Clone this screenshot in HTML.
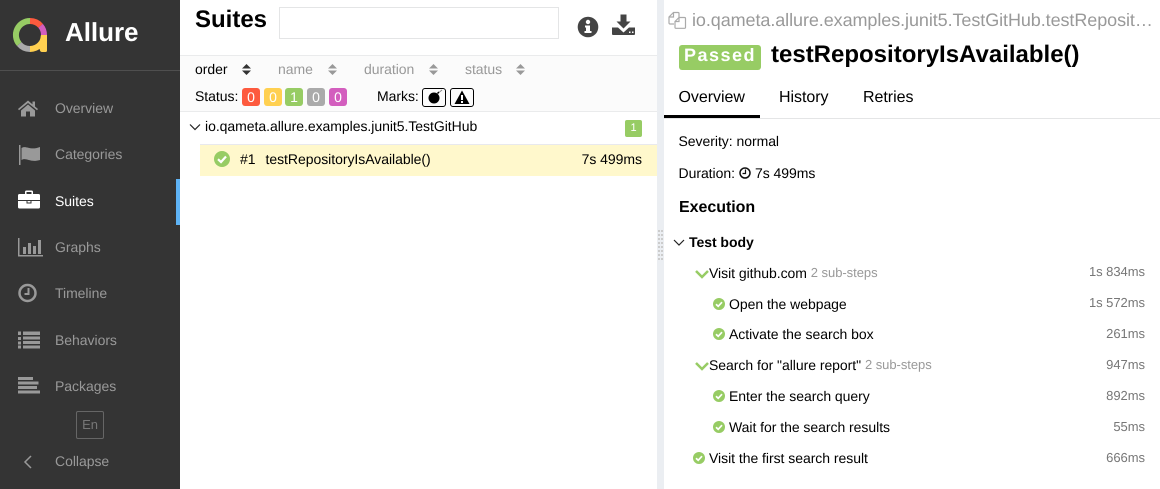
<!DOCTYPE html>
<html><head><meta charset="utf-8"><style>
html,body{margin:0;padding:0;width:1160px;height:489px;overflow:hidden;background:#fff;font-family:"Liberation Sans",sans-serif;font-size:14px;color:#000;text-rendering:geometricPrecision;letter-spacing:-.04px}
.t{position:absolute;white-space:nowrap;line-height:16px}
.b{position:absolute}
svg{position:absolute;display:block}
.n{color:#999;left:55px}
.s{color:#999;left:278px}
.bd{position:absolute;top:88px;width:18px;height:18px;border-radius:3px;color:#fff;text-align:center;line-height:18px;font-size:14px;opacity:1}
.mk{position:absolute;top:88px;width:22px;height:17px;border:1px solid #000;border-radius:3px}
.g{color:#999;font-size:13px;position:relative;top:-1px}
.r{position:absolute;right:15px;color:#777;font-size:13px;line-height:16px}
</style></head><body>
<!-- side -->
<div class="b" style="left:0;top:0;width:180px;height:489px;background:#343434"></div>
<div class="b" style="left:0;top:70px;width:180px;height:1px;background:#4f4f4f"></div>
<div class="b" style="left:176px;top:179px;width:4px;height:46px;background:#5eb3f5"></div>
<svg style="left:12px;top:17px" width="36" height="36" viewBox="0 0 36 36" fill="none" stroke-width="6">
<path d="M18 4A14 14 0 0 1 28.600 8.800" stroke="#fd5a3e"/>
<path d="M28.600 8.800A14 14 0 0 1 32 18" stroke="#d35ebe"/>
<path d="M32 18A14 14 0 0 1 18 32" stroke="#ffd050"/>
<path d="M18 32A14 14 0 0 1 7.200 27" stroke="#aaa"/>
<path d="M7.200 27A14 14 0 0 1 18 4" stroke="#97cc64"/>
<path d="M29 18H35V33.500Q35 35 33.500 35H30Q28.500 35 28 33.500L27 29z" fill="#ffd050" stroke="none"/>
</svg>
<div class="t" style="left:65px;top:17px;font-size:26px;line-height:30px;font-weight:bold;color:#fff">Allure</div>
<div class="t n" style="top:100px">Overview</div>
<div class="t n" style="top:146px">Categories</div>
<div class="t" style="left:55px;top:193px;color:#fff">Suites</div>
<div class="t n" style="top:239px">Graphs</div>
<div class="t n" style="top:285px">Timeline</div>
<div class="t n" style="top:332px">Behaviors</div>
<div class="t n" style="top:378px">Packages</div>
<div class="t n" style="top:453px">Collapse</div>
<div class="b" style="left:76px;top:411px;width:26px;height:26px;border:1px solid #666;border-radius:2px;color:#777;font-size:13px;line-height:25px;text-align:center">En</div>
<svg style="left:18px;top:100px" width="20" height="17" viewBox="0 0 20 17" fill="#999"><path d="M10 0.500L0 9l1 1.200L10 3l9 7.200 1-1.200-3-2.500V1.500h-2.500v2.900zM3 10.500V16.500H8V11.500h4V16.500h5V10.500L10 4.500z"/></svg>
<svg style="left:18px;top:144px" width="23" height="21" viewBox="0 0 23 21" fill="#999"><rect x="1" y="1" width="1.500" height="20"/><path d="M3.500 4C8 1 12 7 22 3V16C12 19 8 13 3.500 16z"/></svg>
<svg style="left:18px;top:190px" width="22" height="19" viewBox="0 0 22 19" fill="#fff"><path d="M7 4V2a1.500 1.500 0 0 1 1.500-1.500h5A1.500 1.500 0 0 1 15 2V4H13.500V2h-5V4zM0 5.500A1.500 1.500 0 0 1 1.500 4h19A1.500 1.500 0 0 1 22 5.500V10H0zM0 11H8.500V13.500H13.500V11H22V17A1.500 1.500 0 0 1 20.500 18.500H1.500A1.500 1.500 0 0 1 0 17z"/><rect x="9.500" y="11" width="3" height="1.500"/></svg>
<svg style="left:18px;top:238px" width="26" height="19" viewBox="0 0 26 19" fill="#999"><rect x="0" y="0" width="1.500" height="18.500"/><rect x="0" y="17" width="25" height="1.500"/><rect x="5" y="9" width="3" height="7"/><rect x="10" y="5" width="3" height="11"/><rect x="15" y="8" width="3" height="8"/><rect x="20" y="2" width="3" height="14"/></svg>
<svg style="left:18px;top:283px" width="20" height="20" viewBox="0 0 20 20" fill="none" stroke="#999"><circle cx="9.500" cy="10" r="8" stroke-width="2.500"/><path d="M10.500 5V11H6.500" stroke-width="2"/></svg>
<svg style="left:18px;top:331px" width="22" height="18" viewBox="0 0 22 18" fill="#999"><rect x="0" y="0.500" width="3" height="3.500"/><rect x="0" y="6" width="3" height="3"/><rect x="0" y="10.500" width="3" height="3"/><rect x="0" y="14.500" width="3" height="3"/><rect x="5" y="0.500" width="17" height="3.500"/><rect x="5" y="5.500" width="17" height="3"/><rect x="5" y="10" width="17" height="3"/><rect x="5" y="14.500" width="17" height="3"/></svg>
<svg style="left:18px;top:376px" width="22" height="18" viewBox="0 0 22 18" fill="#999"><rect x="0" y="1" width="15" height="3"/><rect x="0" y="5.500" width="20.500" height="3"/><rect x="0" y="10" width="19" height="3"/><rect x="0" y="14.500" width="22" height="3"/></svg>
<svg style="left:22px;top:455px" width="12" height="14" viewBox="0 0 12 14" fill="none" stroke="#999" stroke-width="1.500"><path d="M9 1L3 7l6 6"/></svg>

<!-- suites pane -->
<div class="t" style="left:195px;top:5px;font-size:24px;line-height:30px;font-weight:bold;letter-spacing:0">Suites</div>
<div class="b" style="left:279px;top:7px;width:278px;height:30px;border:1px solid #e4e5e6"></div>
<svg style="left:577px;top:16px" width="22" height="22" viewBox="0 0 22 22"><circle cx="11" cy="11" r="10.300" fill="#444"/><circle cx="11" cy="6" r="2.200" fill="#fff"/><path d="M8 9.500H13V15H14.500V17H7.500V15H9V11.500H8z" fill="#fff"/></svg>
<svg style="left:612px;top:14px" width="24" height="22" viewBox="0 0 24 22" fill="#444"><path d="M8.500 0.500H14.500V7.500H18.500L11.500 14.500L4.500 7.500H8.500z"/><path d="M0 13.500H6L11.500 18.500L17 13.500H23V20a1 1 0 0 1-1 1H1a1 1 0 0 1-1-1z"/><rect x="17" y="17.500" width="1.500" height="1.500" fill="#fff"/><rect x="20" y="17.500" width="1.500" height="1.500" fill="#fff"/></svg>
<div class="b" style="left:180px;top:55px;width:477px;height:55px;background:#fbfbfb;border-top:1px solid #eaebec;border-bottom:1px solid #eaebec"></div>
<div class="t" style="left:195px;top:61px">order</div>
<div class="t s" style="top:61px">name</div>
<div class="t s" style="left:364px;top:61px">duration</div>
<div class="t s" style="left:465px;top:61px">status</div>
<svg style="left:241.500px;top:64px" width="9" height="11" viewBox="0 0 9 11" fill="#333"><path d="M4.500 0L9 4.500H0zM0 6.500H9L4.500 11z"/></svg>
<svg style="left:327.500px;top:64px" width="9" height="11" viewBox="0 0 9 11" fill="#999"><path d="M4.500 0L9 4.500H0zM0 6.500H9L4.500 11z"/></svg>
<svg style="left:428.500px;top:64px" width="9" height="11" viewBox="0 0 9 11" fill="#999"><path d="M4.500 0L9 4.500H0zM0 6.500H9L4.500 11z"/></svg>
<svg style="left:516px;top:64px" width="9" height="11" viewBox="0 0 9 11" fill="#999"><path d="M4.500 0L9 4.500H0zM0 6.500H9L4.500 11z"/></svg>
<div class="t" style="left:195px;top:88px">Status:</div>
<div class="bd" style="left:242px;background:#fd5a3e">0</div>
<div class="bd" style="left:264px;background:#ffd050">0</div>
<div class="bd" style="left:285px;background:#97cc64">1</div>
<div class="bd" style="left:307px;background:#aaa">0</div>
<div class="bd" style="left:329px;background:#d35ebe">0</div>
<div class="t" style="left:377px;top:88px">Marks:</div>
<div class="mk" style="left:422px"><svg style="left:4px;top:0" width="16" height="16" viewBox="0 0 16 16"><circle cx="7" cy="9" r="5.500" fill="#000"/><path d="M10.500 4.500L12 3" stroke="#000" stroke-width="1.500"/><path d="M12.500 3L15 1" stroke="#888"/></svg></div>
<div class="mk" style="left:450px"><svg style="left:3px;top:1px" width="16" height="15" viewBox="0 0 16 15"><path d="M8 .5L15.500 14H.5z" fill="#000"/><rect x="7" y="5" width="2" height="5" fill="#fff"/><rect x="7" y="11" width="2" height="2" fill="#fff"/></svg></div>
<svg style="left:189px;top:122px" width="12" height="10" viewBox="0 0 12 10" fill="none" stroke="#222" stroke-width="1.200"><path d="M1 2.500L6 7.500L11 2.500"/></svg>
<div class="t" style="left:205px;top:118px">io.qameta.allure.examples.junit5.TestGitHub</div>
<div class="b" style="left:625px;top:120px;width:17px;height:17px;border-radius:2px;background:#97cc64;color:#fff;font-size:11px;line-height:16px;text-align:center">1</div>
<div class="b" style="left:200px;top:144px;width:457px;height:31px;background:#fff8cc;border-top:1px solid #e8e9ee"></div>
<svg style="left:214px;top:151px" width="16" height="16" viewBox="0 0 16 16"><circle cx="8" cy="8" r="8" fill="#97cc64"/><path d="M4 8.200L7 11L12 5.500" fill="none" stroke="#fff" stroke-width="2.200"/></svg>
<div class="t" style="left:240px;top:151px">#1</div>
<div class="t" style="left:265.500px;top:151px">testRepositoryIsAvailable()</div>
<div class="t" style="right:518px;top:151px">7s 499ms</div>

<!-- splitter -->
<div class="b" style="left:657px;top:0;width:7px;height:489px;background:#ebeef2"></div>
<svg style="left:658px;top:230px" width="6" height="30" viewBox="0 0 6 30" fill="#ccc"><rect x="0" y="0" width="2" height="2"/><rect x="3" y="0" width="2" height="2"/><rect x="0" y="4" width="2" height="2"/><rect x="3" y="4" width="2" height="2"/><rect x="0" y="8" width="2" height="2"/><rect x="3" y="8" width="2" height="2"/><rect x="0" y="12" width="2" height="2"/><rect x="3" y="12" width="2" height="2"/><rect x="0" y="16" width="2" height="2"/><rect x="3" y="16" width="2" height="2"/><rect x="0" y="20" width="2" height="2"/><rect x="3" y="20" width="2" height="2"/><rect x="0" y="24" width="2" height="2"/><rect x="3" y="24" width="2" height="2"/><rect x="0" y="28" width="2" height="2"/><rect x="3" y="28" width="2" height="2"/></svg>

<!-- detail pane -->
<svg style="left:668px;top:10px" width="20" height="20" viewBox="0 0 20 20" fill="none" stroke="#aaa" stroke-width="1.200"><path d="M6 14H2a1 1 0 0 1-1-1V7L5.500 2.500H10a1 1 0 0 1 1 1V7"/><path d="M5.500 2.500V7H1"/><path d="M7 17.500V11.500L11 7.500H16.500a1 1 0 0 1 1 1V17.500a.8.8 0 0 1-.8.8H7.800a.8.8 0 0 1-.8-.8z"/><path d="M11 7.500V11.500H7"/></svg>
<div class="t" style="left:692px;top:10px;font-size:18px;line-height:21px;color:#999;width:461px;overflow:hidden;text-overflow:ellipsis;letter-spacing:-.08px">io.qameta.allure.examples.junit5.TestGitHub.testRepositoryIsAvailable</div>
<div class="b" style="left:679px;top:45px;width:82px;height:25px;border-radius:3px;background:#97cc64;color:#fff;font-weight:bold;font-size:18px;line-height:20px;text-align:center;letter-spacing:1.500px">Passed</div>
<div class="t" style="left:771px;top:41px;font-size:24px;line-height:28px;font-weight:bold;letter-spacing:0">testRepositoryIsAvailable()</div>
<div class="t" style="left:678.500px;top:88px;font-size:16px;line-height:19px">Overview</div>
<div class="t" style="left:779px;top:88px;font-size:16px;line-height:19px">History</div>
<div class="t" style="left:863px;top:88px;font-size:16px;line-height:19px">Retries</div>
<div class="b" style="left:664px;top:118px;width:496px;height:1px;background:#e4e5e6"></div>
<div class="b" style="left:664px;top:115px;width:96px;height:3px;background:#000"></div>
<div class="t" style="left:678.500px;top:133px">Severity: normal</div>
<div class="t" style="left:678.500px;top:165px">Duration:</div>
<svg style="left:739px;top:167px" width="12" height="12" viewBox="0 0 12 12" fill="none" stroke="#111"><circle cx="6" cy="6" r="5" stroke-width="1.500"/><path d="M6.500 2.500V6.500H3.500" stroke-width="1.200"/></svg>
<div class="t" style="left:755px;top:165px">7s 499ms</div>
<div class="t" style="left:679px;top:198px;font-size:16px;line-height:19px;font-weight:bold">Execution</div>
<svg style="left:673px;top:238px" width="12" height="10" viewBox="0 0 12 10" fill="none" stroke="#222" stroke-width="1.200"><path d="M1 2L6 7L11 2"/></svg>
<div class="t" style="left:689px;top:234px;font-weight:bold">Test body</div>

<svg style="left:695px;top:269px" width="14" height="10" viewBox="0 0 14 10" fill="none" stroke="#97cc64" stroke-width="2.500"><path d="M1 2L7 8L13 2"/></svg>
<div class="t" style="left:709px;top:265px">Visit github.com <span class="g">2 sub-steps</span></div>
<div class="r" style="top:264px">1s 834ms</div>
<svg style="left:713px;top:298px" width="12" height="12" viewBox="0 0 12 12"><circle cx="6" cy="6" r="6" fill="#97cc64"/><path d="M3 6.200L5.200 8.300L9 4.200" fill="none" stroke="#fff" stroke-width="1.700"/></svg>
<div class="t" style="left:729px;top:296px">Open the webpage</div>
<div class="r" style="top:295px">1s 572ms</div>
<svg style="left:713px;top:328px" width="12" height="12" viewBox="0 0 12 12"><circle cx="6" cy="6" r="6" fill="#97cc64"/><path d="M3 6.200L5.200 8.300L9 4.200" fill="none" stroke="#fff" stroke-width="1.700"/></svg>
<div class="t" style="left:729px;top:326px">Activate the search box</div>
<div class="r" style="top:326px">261ms</div>
<svg style="left:695px;top:361px" width="14" height="10" viewBox="0 0 14 10" fill="none" stroke="#97cc64" stroke-width="2.500"><path d="M1 2L7 8L13 2"/></svg>
<div class="t" style="left:709px;top:357px">Search for "allure report" <span class="g">2 sub-steps</span></div>
<div class="r" style="top:357px">947ms</div>
<svg style="left:713px;top:390px" width="12" height="12" viewBox="0 0 12 12"><circle cx="6" cy="6" r="6" fill="#97cc64"/><path d="M3 6.200L5.200 8.300L9 4.200" fill="none" stroke="#fff" stroke-width="1.700"/></svg>
<div class="t" style="left:729px;top:388px">Enter the search query</div>
<div class="r" style="top:388px">892ms</div>
<svg style="left:713px;top:421px" width="12" height="12" viewBox="0 0 12 12"><circle cx="6" cy="6" r="6" fill="#97cc64"/><path d="M3 6.200L5.200 8.300L9 4.200" fill="none" stroke="#fff" stroke-width="1.700"/></svg>
<div class="t" style="left:729px;top:419px">Wait for the search results</div>
<div class="r" style="top:419px">55ms</div>
<svg style="left:693px;top:452px" width="12" height="12" viewBox="0 0 12 12"><circle cx="6" cy="6" r="6" fill="#97cc64"/><path d="M3 6.200L5.200 8.300L9 4.200" fill="none" stroke="#fff" stroke-width="1.700"/></svg>
<div class="t" style="left:709px;top:450px">Visit the first search result</div>
<div class="r" style="top:450px">666ms</div>
</body></html>
